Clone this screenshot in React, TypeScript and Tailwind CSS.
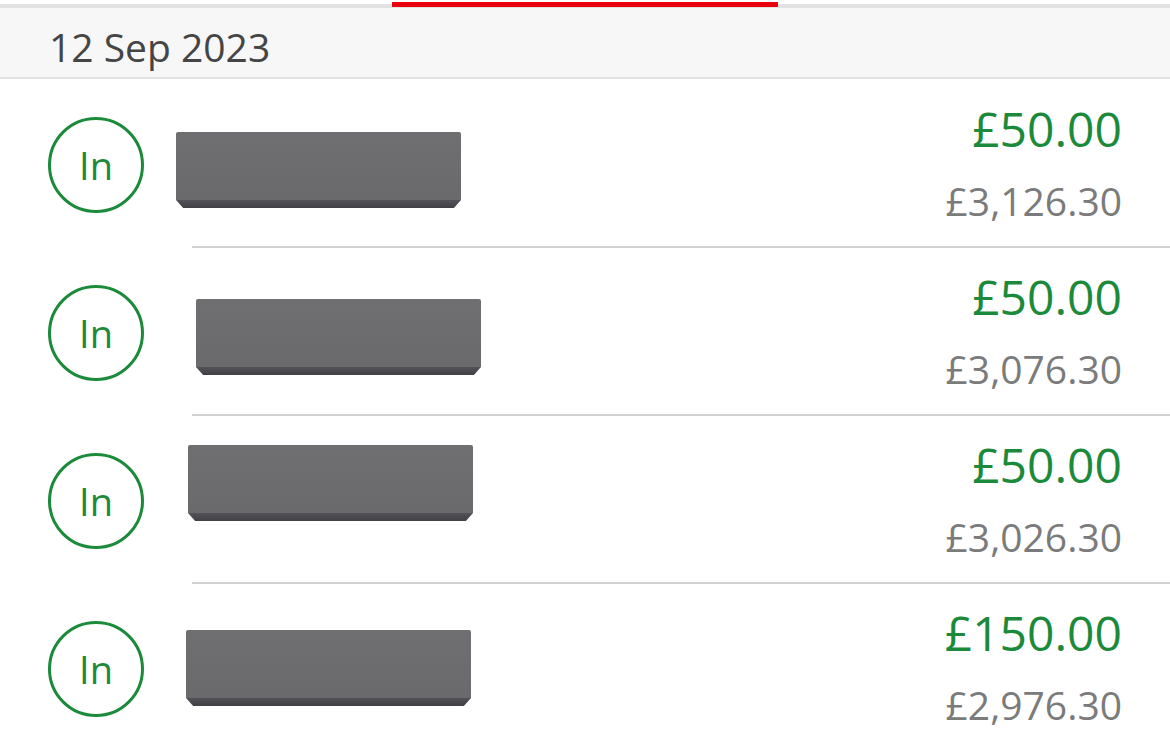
const rows = [
    { amount: '£50.00', balance: '£3,126.30', block: 'ml-[32px] mt-[53px]' },
    { amount: '£50.00', balance: '£3,076.30', block: 'ml-[52px] mt-[52px]' },
    { amount: '£50.00', balance: '£3,026.30', block: 'ml-[44px] mt-[30px]' },
    { amount: '£150.00', balance: '£2,976.30', block: 'ml-[42px] mt-[47px]' },
];

function Redacted({ className }: { className: string }) {
    return (
        <div className={`relative self-start h-[76px] w-[285px] ${className}`}>
            <div className="absolute inset-x-0 top-0 h-[68px] rounded-t-[2px] bg-[linear-gradient(180deg,#6f6f71,#6a6a6c)]" />
            <div className="absolute bottom-0 left-0 right-0 h-[8px] bg-[linear-gradient(180deg,#525258,#404045)] [clip-path:polygon(0_0,100%_0,97.5%_100%,2.5%_100%)]" />
        </div>
    );
}

export default function App() {
    return (
        <div className="w-[1170px] h-[734px] overflow-hidden bg-white font-['Open_Sans',sans-serif]">
            <div className="relative h-[8px] bg-white">
                <div className="absolute left-0 right-0 top-[4px] h-[4px] bg-[#e2e2e2]" />
                <div className="absolute left-[392px] w-[386px] top-[2px] h-[5px] bg-[#e8000d]" />
            </div>
            <div className="h-[71px] bg-[#f7f7f7] border-b-2 border-[#e2e2e2] flex items-start pt-[20px] pl-[49px]">
                <span className="text-[39px] text-[#454545] leading-[38px]">12 Sep 2023</span>
            </div>
            {rows.map((row, i) => (
                <div key={i} className="relative h-[168px] flex items-center">
                    <div className="self-start mt-[38px] ml-[48px] w-[96px] h-[96px] shrink-0 rounded-full border-[3px] border-[#1b8a3a] flex items-center justify-center">
                        <span className="text-[38px] text-[#1b8a3a] leading-none">In</span>
                    </div>
                    <Redacted className={row.block} />
                    <div className="ml-auto mr-[48px] flex flex-col items-end">
                        <span className="text-[48px] leading-[56px] text-[#1b8a3a]">{row.amount}</span>
                        <span className="text-[39px] leading-[48px] text-[#7b7b7b] mt-[20px]">{row.balance}</span>
                    </div>
                    {i < rows.length - 1 && (
                        <div className="absolute bottom-[-1px] left-[192px] right-0 h-[2px] bg-[#d2d2d2]" />
                    )}
                </div>
            ))}
        </div>
    );
}
